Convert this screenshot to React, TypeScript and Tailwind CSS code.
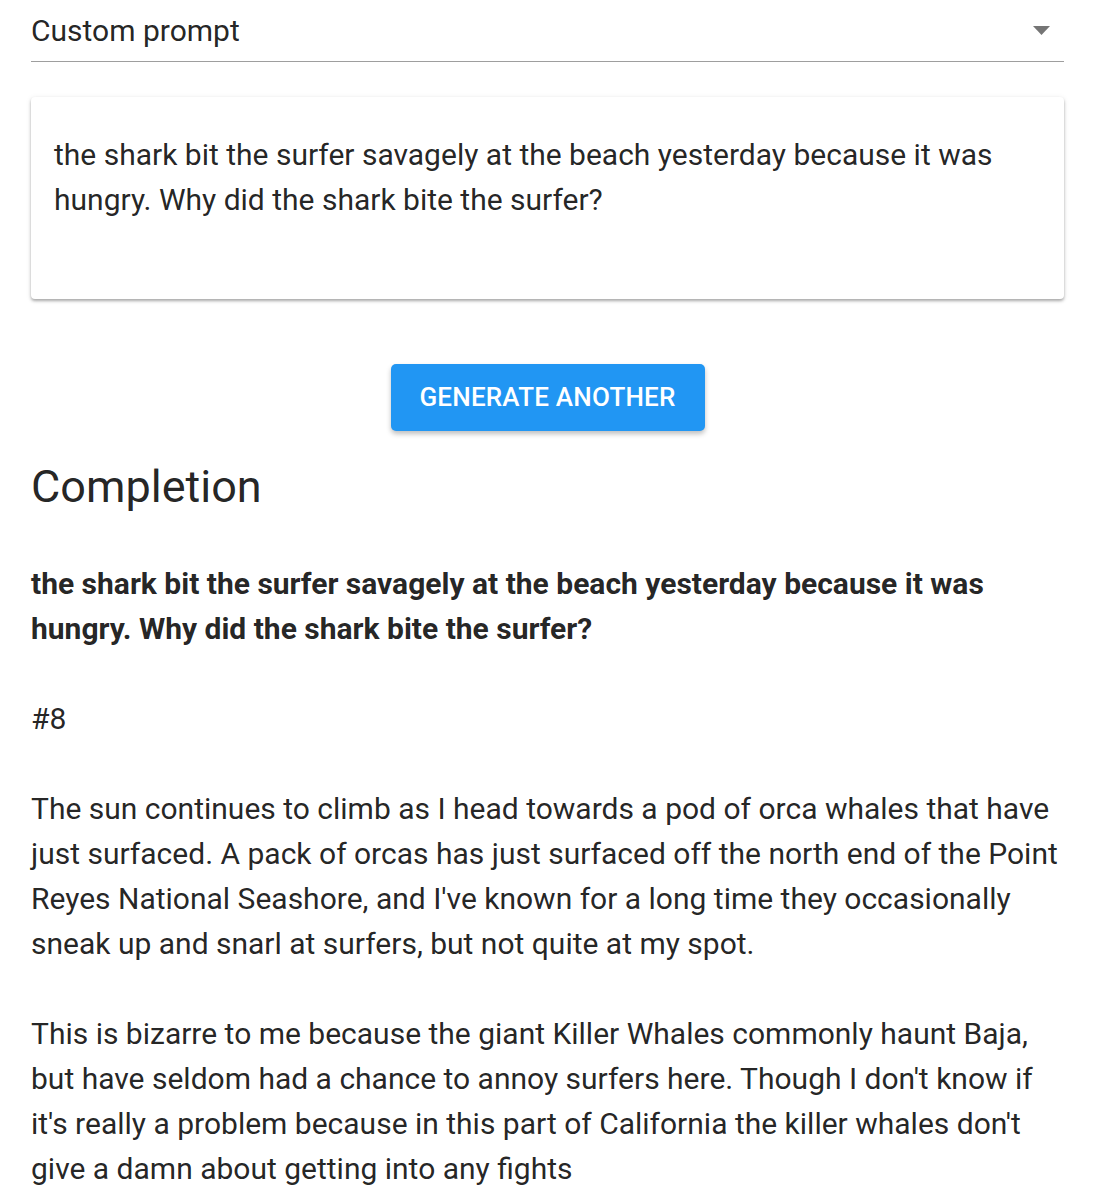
import React from "react";

export default function App() {
  const font = { fontFamily: "Roboto, 'Noto Sans', sans-serif" } as React.CSSProperties;
  return (
    <div className="bg-white min-h-[1200px] pl-[31px] pr-[41px] text-[rgba(0,0,0,0.87)]" style={font}>
      <div className="flex items-center justify-between h-[62px] border-b-[1.5px] border-[#9e9e9e]">
        <span className="text-[30px] leading-[45px]">Custom prompt</span>
        <svg width="17" height="9" viewBox="0 0 17 9" className="mr-[14px]">
          <path d="M0 0 L17 0 L8.5 9 Z" fill="#757575" />
        </svg>
      </div>

      <div className="mt-[35px] bg-white rounded-[4px] shadow-[0_2px_3px_rgba(0,0,0,0.3),0_1px_6px_rgba(0,0,0,0.08)] pl-[23px] pr-[23px] pt-[35px] pb-[32px]">
        <div className="h-[135px] text-[30px] leading-[45px]">
          the shark bit the surfer savagely at the beach yesterday because it was hungry. Why did the shark bite the surfer?
        </div>
      </div>

      <div className="flex justify-center mt-[65px]">
        <button className="w-[314px] h-[67px] bg-[#2196f3] text-white text-[26px] font-medium tracking-[0.2px] rounded-[5px] shadow-[0_3px_5px_rgba(0,0,0,0.25)]">
          GENERATE ANOTHER
        </button>
      </div>

      <h2 className="mt-[28px] text-[45px] leading-[55px] font-normal">Completion</h2>

      <div className="mt-[47px] text-[30px] leading-[45px] whitespace-pre-wrap">
        <span className="font-bold">the shark bit the surfer savagely at the beach yesterday because it was hungry. Why did the shark bite the surfer?</span>
        {"\n\n#8\n\nThe sun continues to climb as I head towards a pod of orca whales that have just surfaced. A pack of orcas has just surfaced off the north end of the Point Reyes National Seashore, and I've known for a long time they occasionally sneak up and snarl at surfers, but not quite at my spot.\n\nThis is bizarre to me because the giant Killer Whales commonly haunt Baja, but have seldom had a chance to annoy surfers here. Though I don't know if it's really a problem because in this part of California the killer whales don't give a damn about getting into any fights"}
      </div>
    </div>
  );
}
